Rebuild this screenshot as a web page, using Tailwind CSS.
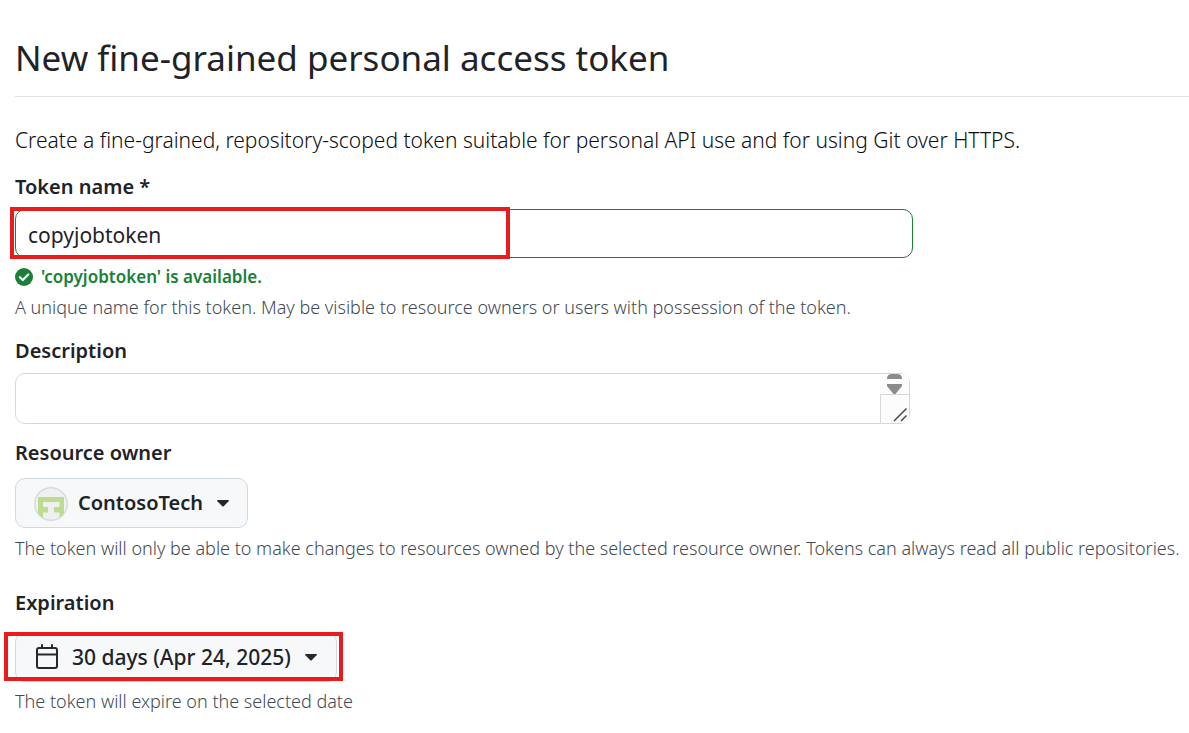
<!DOCTYPE html>
<html lang="en">
<head>
<meta charset="utf-8">
<meta name="viewport" content="width=device-width, initial-scale=1">
<title>New fine-grained personal access token</title>
<script src="https://cdn.jsdelivr.net/npm/@tailwindcss/browser@4"></script>
</head>
<body class="bg-white text-[#1f2328] font-['Noto_Sans',sans-serif] text-[20px] leading-[30px]">
<main class="pt-8 pl-[15px]">
  <h1 class="border-b border-[#dfe2e6] pb-3 text-[35px] leading-[52px] font-normal">New fine-grained personal access token</h1>
  <p class="mt-7 whitespace-nowrap text-[21px] font-light text-[#0c0e11]">Create a fine-grained, repository-scoped token suitable for personal API use and for using Git over HTTPS.</p>

  <form>
    <label for="token-name" class="mt-[17px] block font-semibold">Token name *</label>
    <div class="relative mt-[7px] max-w-[898px]">
      <input id="token-name" type="text" value="copyjobtoken" class="block h-[49px] w-full rounded-[10px] border border-[#1a7f37] bg-white px-3 pt-0.5 text-[21px] font-normal outline-none">
      <div class="pointer-events-none absolute -top-0.5 -left-[5px] h-[52px] w-[500px] border-4 border-[#e81c1c]"></div>
    </div>
    <p class="mt-1 flex items-center gap-2 text-[17px] font-semibold text-[#1a7f37]">
      <svg class="size-[18px]" viewBox="0 0 18 18" fill="none" aria-hidden="true"><circle cx="9" cy="9" r="9" fill="#1a7f37"/><path d="M4.9 9.2 7.8 12l5.4-5.5" stroke="#fff" stroke-width="2.2" stroke-linecap="round" stroke-linejoin="round"/></svg>
      'copyjobtoken' is available.
    </p>
    <p class="text-[18px] font-light whitespace-nowrap text-[#414a54]">A unique name for this token. May be visible to resource owners or users with possession of the token.</p>

    <label for="description" class="mt-[14px] block font-semibold">Description</label>
    <div class="relative mt-[7px] max-w-[895px]">
      <textarea id="description" class="block h-[51px] w-full resize-none overflow-hidden rounded-[10px] border border-[#d1d9e0] bg-white px-3 py-2 outline-none"></textarea>
      <svg class="pointer-events-none absolute top-0 right-0 h-[51px] w-[30px]" viewBox="0 0 30 51" fill="none" aria-hidden="true">
        <path d="M0 1h24q5 2 5 8v34q0 6-5 7H0z" fill="#fcfcfc"/>
        <path d="M.5 50V21.500H29" stroke="#d5d9dc"/>
        <path d="M7 6q0-5 5-5h5q5 0 5 5z" fill="#8b8b8b"/>
        <path d="M7 11h15v2l-6.500 8h-2L7 13z" fill="#8b8b8b"/>
        <path d="M14 48 26.500 35.500M21 48l5.500-5.500" stroke="#4a4a4a" stroke-width="1.500"/>
      </svg>
    </div>

    <label for="owner" class="mt-[14px] block font-semibold">Resource owner</label>
    <button id="owner" type="button" class="mt-[10px] flex h-[50px] items-center rounded-[10px] border border-[#d1d9e0] bg-[#f6f8fa] px-[18px] font-semibold">
      <svg class="mt-0.5 size-[34px]" viewBox="0 0 34 34" aria-hidden="true">
        <defs><clipPath id="avatar"><circle cx="17" cy="17" r="16"/></clipPath></defs>
        <circle cx="17" cy="17" r="16.300" fill="#f0f0f0" stroke="#d8dbde" stroke-width="1.400"/>
        <path clip-path="url(#avatar)" fill="#bddc90" d="M4 10h26v24h-4.500v-8.500H20V20h5.500v-5H9v5h5v5.500H9V34H4z"/>
      </svg>
      <span class="ml-[10px]">ContosoTech</span>
      <svg class="ml-[14px] h-[7px] w-3" viewBox="0 0 12 7" aria-hidden="true"><path d="M.8 0h10.400q1.200.3.400 1.200L6.700 6.200q-.7.600-1.400 0L.4 1.200Q-.4.300.8 0z" fill="#25292e"/></svg>
    </button>
    <p class="mt-[5px] text-[18px] font-light whitespace-nowrap text-[#414a54]">The token will only be able to make changes to resources owned by the selected resource owner. Tokens can always read all public repositories.</p>

    <label for="expiration" class="mt-[25px] block font-semibold">Expiration</label>
    <div class="relative mt-[14px] w-fit">
      <button id="expiration" type="button" class="flex h-[50px] items-center rounded-[10px] border border-[#d1d9e0] bg-[#f6f8fa] px-[19px] text-[21px] font-medium">
        <svg class="h-[26px] w-6" viewBox="0 0 24 26" fill="none" stroke="#25292e" stroke-width="2" stroke-linecap="round" aria-hidden="true"><rect x="2" y="4" width="20" height="20" rx="2"/><path d="M2 10.500h20M7 1v3M17 1v3"/></svg>
        <span class="ml-[13px]">30 days (Apr 24, 2025)</span>
        <svg class="ml-[14px] h-[7px] w-3" viewBox="0 0 12 7" aria-hidden="true"><path d="M.8 0h10.400q1.200.3.400 1.200L6.700 6.200q-.7.600-1.400 0L.4 1.200Q-.4.300.8 0z" fill="#25292e"/></svg>
      </button>
      <div class="pointer-events-none absolute top-0 -right-[6px] -left-[11px] h-[49px] border-4 border-[#e81c1c]"></div>
    </div>
    <p class="mt-1 text-[18px] font-light whitespace-nowrap text-[#414a54]">The token will expire on the selected date</p>
  </form>
</main>
</body>
</html>
